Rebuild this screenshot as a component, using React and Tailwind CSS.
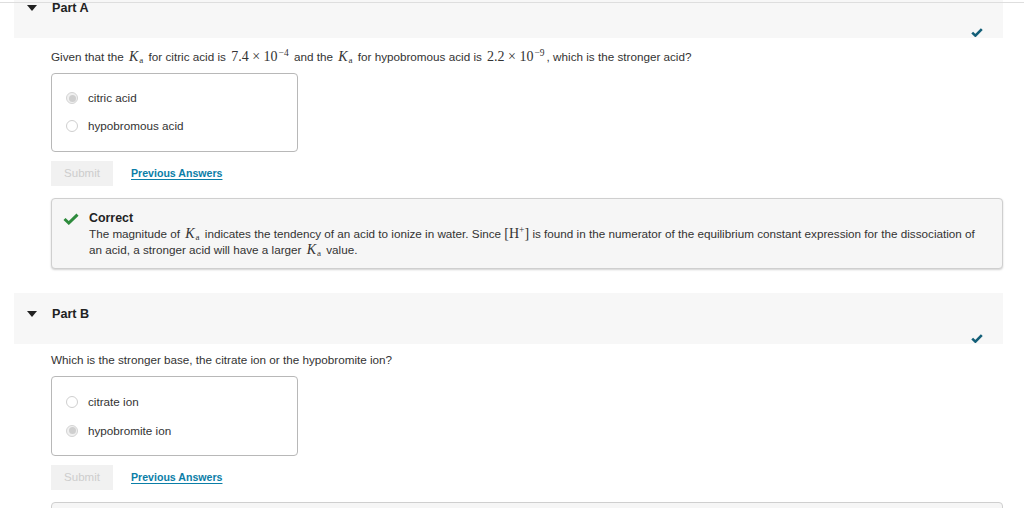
import React from "react";

// --- small math helpers (KaTeX-ish look) ---
const Ka = () => (
  <span className="font-['Liberation_Serif',serif] text-[14px] leading-none mx-[2px] whitespace-nowrap">
    <i>K</i>
    <span className="text-[9px] leading-none relative top-[2px] ml-[1px]">a</span>
  </span>
);

const Sci = ({ base, exp }) => (
  <span className="font-['Liberation_Serif',serif] text-[14px] leading-none mx-[2px] whitespace-nowrap">
    {base} × 10
    <span className="text-[9.5px] leading-none relative top-[-5px] ml-[1px]">−{exp}</span>
  </span>
);

const Caret = () => (
  <svg width="10" height="6" viewBox="0 0 10 6" className="shrink-0">
    <polygon points="0,0 10,0 5,6" fill="#222" />
  </svg>
);

const HeaderCheck = () => (
  <svg width="12" height="9" viewBox="0 0 12 9" className="absolute right-[20px] bottom-[1px]">
    <path d="M1.2 4.6 L4.4 7.6 L10.8 1.2" fill="none" stroke="#135f78" strokeWidth="2.6" />
  </svg>
);

const Radio = ({ checked }) => (
  <span
    className={`w-[12px] h-[12px] rounded-full border flex items-center justify-center shrink-0 ${
      checked ? "border-[#d4d4d4] bg-[#f0f0f0]" : "border-[#cfcfcf] bg-white"
    }`}
  >
    {checked && <span className="w-[7px] h-[7px] rounded-full bg-[#cfcfcf]" />}
  </span>
);

const Options = ({ items, selected, rowH, pb }) => (
  <div className={`w-[247px] border border-[#b8b8b8] rounded-[4px] pt-[10px] ${pb} pl-[14px]`}>
    {items.map((label, i) => (
      <div key={label} className={`${rowH} flex items-center gap-[10px]`}>
        <Radio checked={i === selected} />
        <span>{label}</span>
      </div>
    ))}
  </div>
);

const SubmitRow = () => (
  <div className="mt-[9px] flex items-center gap-[18px]">
    <button className="w-[62px] h-[25px] bg-[#f1f1f1] text-[#cdcdcd] text-[11.5px]">Submit</button>
    <a className="text-[10.6px] font-bold text-[#0b7ea7] underline underline-offset-[2px]">
      Previous Answers
    </a>
  </div>
);

const PartHeader = ({ title }) => (
  <div className="h-[51px] bg-[#f7f7f7] relative flex items-start pt-[13px] pl-[13px] gap-[15px]">
    <div className="h-[16px] flex items-center">
      <Caret />
    </div>
    <span className="text-[12.6px] font-bold leading-[16px] text-[#222]">{title}</span>
    <HeaderCheck />
  </div>
);

export default function App() {
  return (
    <div className="h-[508px] overflow-hidden bg-white relative font-['Liberation_Sans',Arial,sans-serif] text-[11.7px] text-[#333]">
      {/* top bar edge */}
      <div className="absolute top-[2px] left-0 right-0 h-px bg-[#dedede] z-10" />

      <div className="-mt-[13px] ml-[14px] w-[989px]">
        {/* Part A */}
        <PartHeader title="Part A" />
        <div className="pl-[37px]">
          <p className="mt-[10px] leading-[18px]">
            Given that the <Ka /> for citric acid is <Sci base="7.4" exp="4" /> and the <Ka /> for hypobromous acid is{" "}
            <Sci base="2.2" exp="9" />, which is the stronger acid?
          </p>
          <div className="mt-[7px]">
            <Options items={["citric acid", "hypobromous acid"]} selected={0} rowH="h-[28px]" pb="pb-[11px]" />
          </div>
          <SubmitRow />

          {/* feedback */}
          <div className="mt-[12px] h-[71px] border border-[#cfcfcf] rounded-[4px] bg-[#f6f6f6] shadow-[0_1px_2px_rgba(0,0,0,0.18)] flex pt-[11px] pl-[11px] pr-[18px]">
            <svg width="16" height="12" viewBox="0 0 16 12" className="mt-[3px] shrink-0">
              <path d="M1.5 6 L5.8 10 L14.5 1.6" fill="none" stroke="#2e8b3d" strokeWidth="3" />
            </svg>
            <div className="ml-[10px] leading-[16px]">
              <div className="text-[12.4px] font-bold text-[#222]">Correct</div>
              <div className="text-[11.7px] text-[#333]">
                The magnitude of <Ka /> indicates the tendency of an acid to ionize in water. Since{" "}
                <span className="font-['Liberation_Serif',serif] text-[14px] leading-none whitespace-nowrap">
                  [H<span className="text-[9.5px] leading-none relative top-[-5px]">+</span>]
                </span>{" "}
                is found in the numerator of the equilibrium constant expression for the dissociation of an acid, a
                stronger acid will have a larger <Ka /> value.
              </div>
            </div>
          </div>
        </div>

        {/* Part B */}
        <div className="mt-[24px]">
          <PartHeader title="Part B" />
        </div>
        <div className="pl-[37px]">
          <p className="mt-[7px] leading-[18px]">Which is the stronger base, the citrate ion or the hypobromite ion?</p>
          <div className="mt-[7px]">
            <Options items={["citrate ion", "hypobromite ion"]} selected={1} rowH="h-[29px]" pb="pb-[10px]" />
          </div>
          <SubmitRow />
          <div className="mt-[12px] h-[71px] border border-[#cfcfcf] rounded-[4px] bg-[#f6f6f6]" />
        </div>
      </div>
    </div>
  );
}
